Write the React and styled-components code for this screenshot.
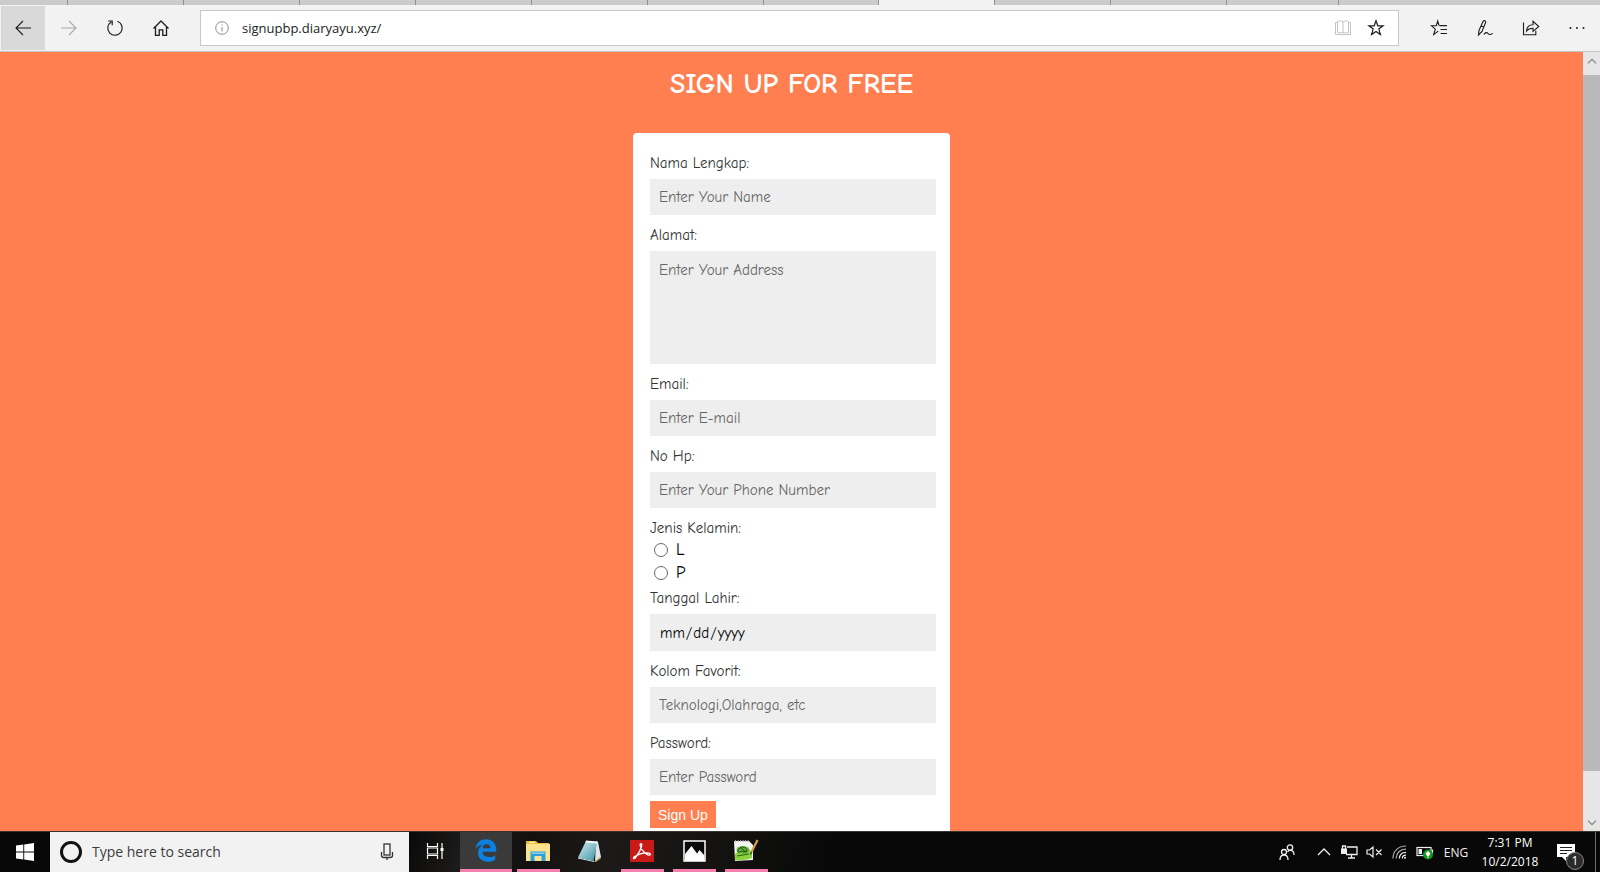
import React from 'react';
import styled, { createGlobalStyle } from 'styled-components';

const coral = '#ff7f50';
const uiFont = '"Segoe UI", "Open Sans", sans-serif';
const formFont = '"Comic Sans MS", "Comic Neue", "Open Sans", sans-serif';

const GlobalStyle = createGlobalStyle`
  *, *::before, *::after { box-sizing: border-box; }
  html, body, #root { height: 100%; margin: 0; }
  body { overflow: hidden; font-family: ${uiFont}; }
  button, input, textarea { font: inherit; margin: 0; border: 0; border-radius: 0; outline: 0; }
`;

const Screen = styled.div`
  height: 100vh;
  display: flex;
  flex-direction: column;
`;

/* Browser chrome */

const TabStrip = styled.div`
  display: flex;
  flex: none;
  height: 5px;
  background: #cbcbcb;
`;

const Tab = styled.div`
  width: ${(p) => p.$width || 116}px;
  border-right: 1px solid #8f8f8f;
  background: ${(p) => (p.$active ? '#f2f2f2' : 'transparent')};
`;

const Toolbar = styled.header`
  display: flex;
  flex: none;
  align-items: center;
  height: 47px;
  padding: 0 1px;
  background: #f2f2f2;
  border-bottom: 1px solid #c4c4c4;
`;

const NavButtons = styled.nav`
  display: flex;
  gap: 2px;
`;

const ToolButton = styled.button`
  display: flex;
  align-items: center;
  justify-content: center;
  width: 44px;
  height: 44px;
  padding: 0;
  color: ${(p) => (p.$faded ? '#a8a8a8' : '#1c1c1c')};
  background: ${(p) => (p.$pressed ? '#d9d9d9' : 'transparent')};
`;

const AddressBar = styled.div`
  display: flex;
  flex: 1;
  align-items: center;
  height: 36px;
  margin: 0 18px 0 17px;
  padding: 0 12px 0 14px;
  gap: 13px;
  color: #8c8c8c;
  background: #fff;
  border: 1px solid #c8c8c8;
`;

const AddressInput = styled.input`
  flex: 1;
  min-width: 0;
  padding: 0;
  font-size: 13px;
  line-height: 20px;
  color: #222;
  background: transparent;
`;

const AddressButton = styled(ToolButton)`
  width: 20px;
  height: 32px;
  color: ${(p) => (p.$faded ? '#c4c4c4' : '#1c1c1c')};
`;

const ToolActions = styled.div`
  display: flex;
  gap: 2px;
`;

/* Page */

const Viewport = styled.div`
  display: flex;
  flex: 1;
  min-height: 0;
`;

const Page = styled.main`
  display: flex;
  flex: 1;
  flex-direction: column;
  align-items: center;
  overflow: hidden;
  background: ${coral};
`;

const Title = styled.h1`
  flex: none;
  margin: 0;
  padding: 14px 0 31px;
  font-family: ${formFont};
  font-size: 28px;
  line-height: 36px;
  font-weight: 700;
  color: #fff;
`;

const Card = styled.form`
  flex: none;
  width: 317px;
  padding: 10px 14px 24px 17px;
  font-family: ${formFont};
  font-size: 15px;
  line-height: 20px;
  color: #333;
  background: #fff;
  border-radius: 4px;
`;

const Label = styled.label`
  display: block;
  padding: 10px 0 6px;
`;

const Input = styled.input`
  display: block;
  width: 100%;
  height: ${(p) => (p.type === 'date' ? 37 : 36)}px;
  padding: 0 9px;
  color: #000;
  background: #eee;
  &::placeholder { color: #666; opacity: 1; }
  &::-webkit-calendar-picker-indicator { display: none; }
  &::-webkit-datetime-edit, &::-webkit-datetime-edit-fields-wrapper { padding: 0; }
`;

const TextArea = styled.textarea`
  display: block;
  width: 100%;
  height: 113px;
  padding: 9px;
  resize: none;
  background: #eee;
  &::placeholder { color: #666; opacity: 1; }
`;

const RadioGroup = styled.fieldset`
  margin: 0;
  padding: 0;
  border: 0;
`;

const Legend = styled.legend`
  padding: 10px 0 0;
`;

const RadioLabel = styled.label`
  display: flex;
  align-items: center;
  gap: 8px;
  height: 23px;
  padding-left: 4px;
  font-size: 17px;
  color: #000;
`;

const Radio = styled.input`
  appearance: none;
  width: 14px;
  height: 14px;
  && { border: 1px solid #666; border-radius: 50%; }
  background: #fff;
  &:checked { background: radial-gradient(#333 40%, #fff 45%); }
`;

const DateLabel = styled(Label)`
  padding-top: 4px;
`;

const SubmitButton = styled.button`
  display: block;
  height: 27px;
  margin-top: 6px;
  padding: 0 8px;
  font-family: Arial, "Liberation Sans", sans-serif;
  font-size: 14px;
  color: #fff;
  background: ${coral};
`;

const Scrollbar = styled.div`
  display: flex;
  flex: none;
  flex-direction: column;
  width: 17px;
  background: #e6e6e6;
`;

const ScrollButton = styled.button`
  display: flex;
  align-items: center;
  justify-content: center;
  width: 17px;
  height: ${(p) => (p.$down ? 17 : 23)}px;
  padding: 0 0 ${(p) => (p.$down ? 0 : 6)}px;
  color: #808080;
  background: transparent;
`;

const ScrollThumb = styled.div`
  flex: 1;
  margin-bottom: 43px;
  background: #b9b9b9;
`;

/* Taskbar */

const Taskbar = styled.footer`
  display: flex;
  flex: none;
  height: 41px;
  color: #fff;
  border-top: 1px solid #3a3532;
  background:
    linear-gradient(105deg, transparent 25%, #1d1b19 29%, #12110f 33%, #1c1a18 38%, #151412 44%, transparent 52%),
    #080808;
`;

const StartButton = styled.button`
  display: flex;
  align-items: center;
  justify-content: center;
  width: 50px;
  padding: 0;
  background: transparent;
`;

const SearchBox = styled.label`
  display: flex;
  align-items: center;
  width: 359px;
  padding: 0 15px 0 9px;
  gap: 9px;
  background: #f2f2f2;
`;

const SearchInput = styled.input`
  flex: 1;
  min-width: 0;
  padding: 0;
  font-size: 14px;
  line-height: 20px;
  background: transparent;
  &::placeholder { color: #3c3c3c; opacity: 1; }
`;

const TaskButton = styled.button`
  display: flex;
  flex-direction: column;
  align-items: center;
  width: 52px;
  padding: 0;
  color: #fff;
  background: ${(p) => (p.$active ? '#3a3a3a' : 'transparent')};
  &::after {
    content: '';
    width: ${(p) => (p.$active ? '52px' : '43px')};
    height: 3px;
    background: ${(p) => (p.$open ? '#f77fb0' : 'transparent')};
  }
`;

const TaskViewButton = styled(TaskButton)`
  width: 51px;
`;

const TaskIcon = styled.span`
  display: flex;
  flex: 1;
  align-items: center;
`;

const Tray = styled.div`
  display: flex;
  align-items: center;
  margin-left: auto;
  font-size: 12px;
  line-height: 19px;
`;

const TrayButton = styled.button`
  display: flex;
  align-items: center;
  justify-content: center;
  width: ${(p) => p.$width || 25}px;
  height: 100%;
  padding: 0;
  color: #eee;
  background: transparent;
`;

const NotificationButton = styled(TrayButton)`
  width: 50px;
  padding-right: 8px;
`;

const Clock = styled.time`
  width: 70px;
  text-align: center;
`;

const ShowDesktop = styled.button`
  width: 5px;
  height: 100%;
  padding: 0;
  background: transparent;
  && { border-left: 1px solid #6c6c6c; }
`;

const Icon = ({ w = 18, h = w, box, sw = 1, children }) => (
  <svg width={w} height={h} viewBox={box || `0 0 ${w} ${h}`} fill="none" stroke="currentColor" strokeWidth={sw} aria-hidden="true">
    {children}
  </svg>
);

const BackIcon = () => <Icon w={18} sw={1.1}><path d="M17 9H2M9 2L2 9l7 7" /></Icon>;
const ForwardIcon = () => <Icon w={18} sw={1.1}><path d="M1 9h15M9 2l7 7-7 7" /></Icon>;
const ReloadIcon = () => (
  <Icon w={18} sw={1.2}><path d="M11.500 2.300A7.200 7.200 0 1 1 5.200 2.900M2.200 2h4v4.300" /></Icon>
);
const HomeIcon = () => (
  <Icon w={18} sw={1.3}><path d="M1.500 9.500L9 2l7.500 7.500M3.500 8v8.300h3.700v-5.500h3.600v5.500h3.700V8" /></Icon>
);
const InfoIcon = () => (
  <Icon w={14}><circle cx="7" cy="7" r="6.300" /><path d="M7 6v4.500M7 3.500v1.300" /></Icon>
);
const BookIcon = () => (
  <Icon w={18}><path d="M9 3v11M9 3C7.500 1.500 5 1.500 3.500 2.500v11.300H9h5.500V2.500C13 1.500 10.500 1.500 9 3M3.500 3.500h-2v12H8l1 .5 1-.5h6.500v-12h-2" /></Icon>
);
const StarIcon = () => (
  <Icon w={18} sw={1.2}><path d="M9 1.800l1.800 5h5.300l-4.300 3.300 1.600 5.500L9 12.400l-4.400 3.200 1.600-5.500L1.900 6.800h5.300z" /></Icon>
);
const FavoritesIcon = () => (
  <Icon w={18} sw={1.1}><path d="M9.500 6.600H17M10.500 10.500H17M10.500 14.500H17M9 6.500L7.700 2 6.300 6.800H1.500l3.800 3.300-1.600 5.500 4.500-3.500" /></Icon>
);
const PenIcon = () => (
  <Icon w={18} sw={1.1}><path d="M2.500 16l.5-4.500L7 2.500c1-1.700 3.300-.8 2.600 1L6 12.500zM5 7l2.800 1M7.800 15.500c2-2.300 3.200-2.300 4.200-1s2 1.700 4.700-.1" /></Icon>
);
const ShareIcon = () => (
  <Icon w={18} sw={1.1}><path d="M1.500 3.500v12.300h12.300v-4M4.500 12c.3-4 2.500-6.300 6.500-6.300V2.300L16.800 7.500 11 12.300V9.200c-3 0-5 .8-6.500 2.800z" /></Icon>
);
const MoreIcon = () => (
  <Icon w={18}><g fill="currentColor" stroke="none"><circle cx="2.500" cy="9" r="1" /><circle cx="9" cy="9" r="1" /><circle cx="15.500" cy="9" r="1" /></g></Icon>
);
const ChevronIcon = ({ down }) => (
  <Icon w={10} h={6} sw={1.2}><path d={down ? 'M1 .7l4 4 4-4' : 'M1 5.300l4-4 4 4'} /></Icon>
);

const WindowsIcon = () => (
  <Icon w={18}><path fill="#fff" stroke="none" d="M0 2.500L7.300 1.500v7H0zM8.200 1.400L18 0v8.500H8.200zM0 9.400h7.300v7L0 15.400zM8.200 9.400H18V18l-9.800-1.400z" /></Icon>
);
const CortanaIcon = () => (
  <Icon w={24}><circle cx="12" cy="12" r="9.500" stroke="#111" strokeWidth="3" /></Icon>
);
const MicIcon = () => (
  <Icon w={14} h={18}><g stroke="#333"><rect x="4" y="1" width="6" height="11" strokeWidth="1.300" /><path d="M1.500 9v3.500c0 1.500 1 2 2.500 2h6c1.500 0 2.500-.5 2.500-2V9M7 15v2" strokeWidth="1.300" /></g></Icon>
);
const TaskViewIcon = () => (
  <Icon w={18} sw={1.2}><path d="M1.500 1v3.500h10V1M1.500 17v-3.500h10V17M1.500 6h10v6h-10zM16 1v16" /><path d="M14.500 6h3v3h-3z" fill="currentColor" stroke="none" /></Icon>
);
const EdgeIcon = () => (
  <Icon w={22} h={23}><path fill="#0c80df" stroke="none" d="M.5 9.700C1.400 3.600 5.600.3 11 .3c6.300 0 10.200 4.300 10.200 10v2.500H7.500c.2 3.500 3 5.200 6.700 5.200 2.300 0 4.300-.6 6-1.600v4.500c-2 1.200-4.500 1.800-7.200 1.800C7 22.700 3 19.300 3 13.800c0-3.600 1.800-6.500 5-8.100C4.600 6.100 2 7.500.5 9.700zM7.600 9.300h7.800c0-2.500-1.200-4-3.700-4-2.300 0-3.700 1.500-4.100 4z" /></Icon>
);
const FolderIcon = () => (
  <Icon w={24} h={22}><g stroke="none"><path fill="#e9b93f" d="M0 1h10l2 2h11v4H0z" /><path fill="#fff2b5" d="M3 1.800h6v1.400H3z" /><path fill="#fbe38e" d="M0 4h24v17H0z" /><path fill="#2e9fd9" d="M4.500 11.500h15V21h-4v-5h-7v5h-4z" /><path fill="#8bd0ef" d="M5.500 12.500h13v1.500h-13z" /></g></Icon>
);
const NotepadIcon = () => (
  <Icon w={24} h={22}>
    <defs>
      <linearGradient id="pad" x1="0" y1="0" x2="1" y2="1">
        <stop offset="0" stopColor="#d3eef2" />
        <stop offset="1" stopColor="#3f93a6" />
      </linearGradient>
    </defs>
    <g stroke="none">
      <path fill="#dfe5e8" d="M18 1l2 1 3 15-6 5z" />
      <path fill="#b99a5c" d="M16.500 21.800l1.500-1.300 5-4v1.700l-5 3.800z" />
      <path fill="#eef6f7" d="M0 17.500L16 21l.5 1L0 18.500z" />
      <path fill="url(#pad)" d="M7.500 2L19 3l-3.500 18L0 17.500z" />
      <path fill="#f4f8f8" d="M8 .5L19.500 1.500 19 3.500 7.300 2.500z" />
    </g>
  </Icon>
);
const AcrobatIcon = () => (
  <Icon w={24} h={22}><rect width="24" height="22" fill="#c81a17" stroke="none" /><path stroke="#fff" strokeWidth="1.300" d="M4 17c-1.500 1.700.3 2.500 1.700.3C8.500 13.500 11 9 11.700 5.500c.5-2.500-1.900-2.500-1.500 0 .5 3 3.600 7.500 7.800 9.300 2.500 1 3.500-1.300.7-1.700-4-.5-10 1-14.700 3.900z" /></Icon>
);
const PhotosIcon = () => (
  <Icon w={23} h={22}><rect x="1" y="1" width="21" height="20" fill="#090909" stroke="#fff" strokeWidth="1.500" /><path fill="#fff" stroke="none" d="M2 14L8.500 6l5.500 7.500L16.500 10l5 5.500V21H2z" /></Icon>
);
const NotepadPlusIcon = () => (
  <Icon w={26} h={23}>
    <path fill="#f2f4ee" stroke="none" d="M1 2h15l4 4v15L2 22z" />
    <path stroke="#a9aaa6" strokeDasharray="1 1.500" strokeWidth="2" d="M2 2h14" />
    <path fill="#8ed13f" stroke="none" d="M2 15c3-3 13-5 17-3v7c-5 2-12 2.500-17 2z" />
    <ellipse cx="10" cy="11" rx="6.500" ry="4" fill="#6fb83a" stroke="none" />
    <path stroke="#27651f" strokeWidth="1.100" d="M4.500 13c1-4 4-6 7-4.500s3.500 4.500.5 4.500-4-2.500-7 1M8 9l5 4M4 17l12-2" />
    <path stroke="#d5a04b" strokeWidth="2.200" d="M24.500 1l-6 12" />
    <path stroke="#444" strokeWidth="1.500" d="M18.500 13l-1 2.500" />
  </Icon>
);
const PeopleIcon = () => (
  <Icon w={16} sw={1.3}><circle cx="11" cy="3.500" r="2.700" /><circle cx="5" cy="8" r="2.500" /><path d="M1 16c0-3 1.500-5 4-5s4 2 4 5M8.500 8c1-1.500 2-1.600 3-1.600 2 0 3.500 1.700 3.500 4.600" /></Icon>
);
const TrayChevron = () => <Icon w={14} h={8} sw={1.300}><path d="M1 7l6-6 6 6" /></Icon>;
const NetworkIcon = () => (
  <Icon w={17} h={14} sw={1.300}><path d="M6 2h10v7.500H5M10.500 9.500V13M7 13h7" /><rect x="0" y="3.500" width="6" height="5.500" fill="currentColor" stroke="none" /><path d="M1.500 4V1h3v3" /></Icon>
);
const MuteIcon = () => (
  <Icon w={17} h={14} sw={1.200}><path d="M1 5h2.500L7 2v10L3.500 9H1zM10 4.500l5.500 5.500M15.500 4.500L10 10" /></Icon>
);
const WifiIcon = () => (
  <Icon w={15} h={14} sw={1.200}><path stroke="#aaa" d="M1 13.500C1 6 6.500 1 14 1M4.200 13.500C4.200 8 8 4.200 14 4.200" /><path d="M7.400 13.500c0-4 2.600-6.200 6.600-6.200M10.300 13.500c0-2 1.500-3.300 3.700-3.300" /><circle cx="13" cy="12.700" r="1" fill="currentColor" stroke="none" /></Icon>
);
const BatteryIcon = () => (
  <Icon w={18} h={15} sw={1.200}><rect x="1" y="2.500" width="14" height="8" /><path d="M16.500 4.500v4" /><rect x="2.500" y="4" width="3.500" height="5" fill="currentColor" stroke="none" /><circle cx="12" cy="9.500" r="5" fill="#14951f" stroke="none" /><path fill="#fff" stroke="none" d="M12 6l2.500 2.500L13 11h-.5v2h-1v-2H11L9.500 8.500z" /></Icon>
);

const Badge = styled.span`
  position: absolute;
  right: -9px;
  bottom: -9px;
  width: 18px;
  height: 18px;
  border: 1px solid #888;
  border-radius: 50%;
  font-size: 12px;
  line-height: 16px;
  text-align: center;
  color: #fff;
  background: #2b2b2b;
`;

const NotificationMark = styled.span`
  position: relative;
  display: flex;
`;

const tabs = [68, 116, 116, 116, 116, 116, 116, 115, 116, 116, 116, 112];

const tasks = [
  { name: 'Microsoft Edge', icon: EdgeIcon, active: true, open: true },
  { name: 'File Explorer', icon: FolderIcon, open: true },
  { name: 'Notepad', icon: NotepadIcon },
  { name: 'Acrobat Reader', icon: AcrobatIcon, open: true },
  { name: 'Photos', icon: PhotosIcon, open: true },
  { name: 'Notepad++', icon: NotepadPlusIcon, open: true },
];

const Field = ({ id, label, ...rest }) => (
  <>
    <Label htmlFor={id}>{label}</Label>
    <Input id={id} {...rest} />
  </>
);

export default function App() {
  return (
    <Screen>
      <GlobalStyle />
      <TabStrip>
        {tabs.map((width, i) => <Tab key={i} $width={width} $active={i === 8} />)}
      </TabStrip>
      <Toolbar>
        <NavButtons>
          <ToolButton $pressed aria-label="Back"><BackIcon /></ToolButton>
          <ToolButton $faded aria-label="Forward"><ForwardIcon /></ToolButton>
          <ToolButton aria-label="Refresh"><ReloadIcon /></ToolButton>
          <ToolButton aria-label="Home"><HomeIcon /></ToolButton>
        </NavButtons>
        <AddressBar>
          <InfoIcon />
          <AddressInput aria-label="Address" defaultValue="signupbp.diaryayu.xyz/" />
          <AddressButton $faded aria-label="Reading view"><BookIcon /></AddressButton>
          <AddressButton aria-label="Add to favorites"><StarIcon /></AddressButton>
        </AddressBar>
        <ToolActions>
          <ToolButton aria-label="Hub"><FavoritesIcon /></ToolButton>
          <ToolButton aria-label="Web notes"><PenIcon /></ToolButton>
          <ToolButton aria-label="Share"><ShareIcon /></ToolButton>
          <ToolButton aria-label="More"><MoreIcon /></ToolButton>
        </ToolActions>
      </Toolbar>

      <Viewport>
        <Page>
          <Title>SIGN UP FOR FREE</Title>
          <Card onSubmit={(e) => e.preventDefault()}>
            <Field id="name" label="Nama Lengkap:" type="text" placeholder="Enter Your Name" />
            <Label htmlFor="address">Alamat:</Label>
            <TextArea id="address" placeholder="Enter Your Address" />
            <Field id="email" label="Email:" type="email" placeholder="Enter E-mail" />
            <Field id="phone" label="No Hp:" type="tel" placeholder="Enter Your Phone Number" />
            <RadioGroup>
              <Legend>Jenis Kelamin:</Legend>
              <RadioLabel><Radio type="radio" name="gender" value="L" />L</RadioLabel>
              <RadioLabel><Radio type="radio" name="gender" value="P" />P</RadioLabel>
            </RadioGroup>
            <DateLabel htmlFor="birth">Tanggal Lahir:</DateLabel>
            <Input id="birth" type="date" />
            <Field id="favorite" label="Kolom Favorit:" type="text" placeholder="Teknologi,Olahraga, etc" />
            <Field id="password" label="Password:" type="password" placeholder="Enter Password" />
            <SubmitButton type="submit">Sign Up</SubmitButton>
          </Card>
        </Page>
        <Scrollbar>
          <ScrollButton aria-label="Scroll up"><ChevronIcon /></ScrollButton>
          <ScrollThumb />
          <ScrollButton $down aria-label="Scroll down"><ChevronIcon down /></ScrollButton>
        </Scrollbar>
      </Viewport>

      <Taskbar>
        <StartButton aria-label="Start"><WindowsIcon /></StartButton>
        <SearchBox>
          <CortanaIcon />
          <SearchInput type="text" aria-label="Search" placeholder="Type here to search" />
          <MicIcon />
        </SearchBox>
        <TaskViewButton aria-label="Task View"><TaskIcon><TaskViewIcon /></TaskIcon></TaskViewButton>
        {tasks.map(({ name, icon: Glyph, active, open }) => (
          <TaskButton key={name} aria-label={name} $active={active} $open={open}>
            <TaskIcon><Glyph /></TaskIcon>
          </TaskButton>
        ))}
        <Tray>
          <TrayButton $width={48} aria-label="People"><PeopleIcon /></TrayButton>
          <TrayButton $width={26} aria-label="Show hidden icons"><TrayChevron /></TrayButton>
          <TrayButton aria-label="Network"><NetworkIcon /></TrayButton>
          <TrayButton aria-label="Volume"><MuteIcon /></TrayButton>
          <TrayButton aria-label="Wi-Fi"><WifiIcon /></TrayButton>
          <TrayButton aria-label="Battery"><BatteryIcon /></TrayButton>
          <TrayButton $width={38} aria-label="Input language">ENG</TrayButton>
          <Clock>7:31 PM<br />10/2/2018</Clock>
          <NotificationButton aria-label="Notifications">
            <NotificationMark>
              <Icon w={18} h={17}><path fill="#fff" stroke="none" d="M0 0h18v13H9v4l-4-4H0z" /><path stroke="#222" d="M3 3.500h12M3 6.500h12M3 9.500h7" /></Icon>
              <Badge>1</Badge>
            </NotificationMark>
          </NotificationButton>
          <ShowDesktop aria-label="Show desktop" />
        </Tray>
      </Taskbar>
    </Screen>
  );
}
